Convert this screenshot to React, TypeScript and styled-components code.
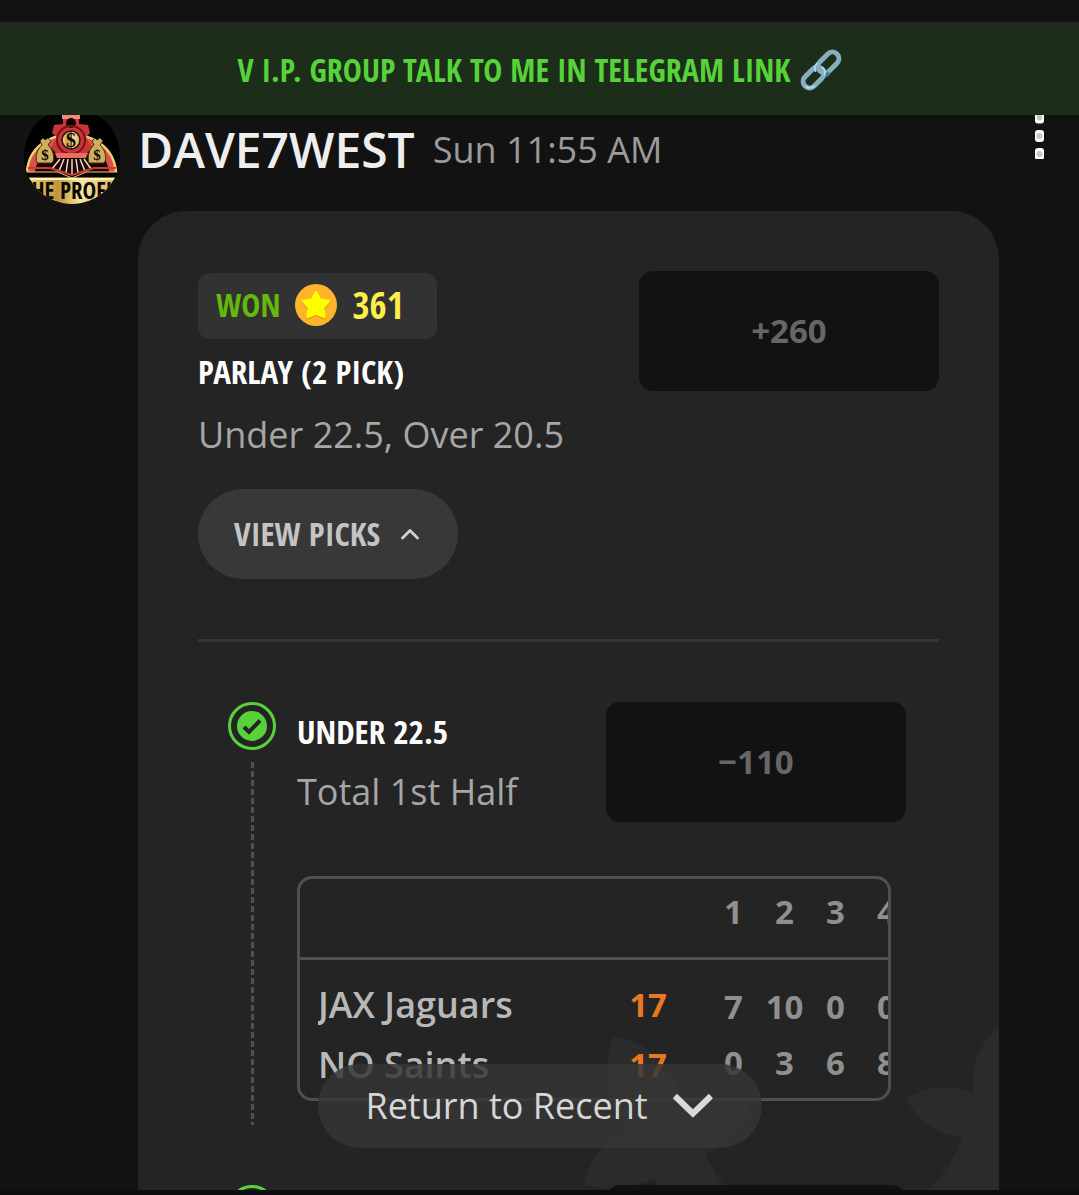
import React from "react";
import styled, { createGlobalStyle } from "styled-components";

const display = `"Saira Semi Condensed", "Noto Sans ExtraCondensed", "Open Sans Condensed", "Noto Sans Condensed", "Roboto Condensed", Roboto, sans-serif`;
const body = `"Open Sans", "Noto Sans", sans-serif`;

const color = {
  page: "#121212",
  card: "#242424",
  raised: "#383838",
  badge: "#323232",
  line: "#505050",
  divider: "#363636",
  green: "#57d23b",
  muted: "#a6a6a6",
};

const GlobalStyle = createGlobalStyle`
  *, *::before, *::after { box-sizing: border-box; }
  body { margin: 0; background: ${color.page}; font-family: ${body}; }
`;

const Screen = styled.div`
  height: 100vh;
  display: flex;
  flex-direction: column;
  overflow: hidden;
  background: ${color.page};
`;

const TopBar = styled.div`
  flex: none;
  height: 25px;
  border-bottom: 3px solid #262626;
`;

const Banner = styled.a`
  flex: none;
  height: 90px;
  display: flex;
  align-items: center;
  justify-content: center;
  gap: 9px;
  background: #1c2e19;
  color: ${color.green};
  font: 600 32px/48px ${display};
  text-decoration: none;
  white-space: nowrap;
`;

const Thread = styled.main`
  flex: 1;
  min-height: 0;
  overflow: hidden;
`;

const Message = styled.article`
  margin-top: -7px;
  padding: 0 24px;
`;

const MessageHead = styled.header`
  display: flex;
  align-items: flex-start;
  height: 103px;
`;

const Author = styled.div`
  flex: 1;
  display: flex;
  align-items: center;
  gap: 18px;
  padding: 9px 0 0 18px;
`;

const Name = styled.h1`
  margin: 0;
  color: #eeeeee;
  font: 600 48px/66px ${body};
`;

const Time = styled.time`
  color: #9b9b9b;
  font-size: 36px;
  line-height: 66px;
`;

const MenuButton = styled.button`
  display: flex;
  margin: 3px 11px 0 0;
  padding: 0;
  border: 0;
  background: none;
`;

const Card = styled.section`
  position: relative;
  margin: 0 56px 0 114px;
  padding: 60px;
  border-radius: 48px;
  background: ${color.card};
`;

const Leaves = styled.svg`
  position: absolute;
  right: 0;
  top: 817px;
`;

const CardTop = styled.div`
  display: flex;
  justify-content: space-between;
  align-items: flex-start;
`;

const Summary = styled.div`
  display: flex;
  flex-direction: column;
  align-items: flex-start;
  padding-top: 2px;
`;

const ResultBadge = styled.div`
  display: flex;
  align-items: center;
  height: 66px;
  padding: 0 33px 3px 18px;
  gap: 15px;
  border-radius: 12px;
  background: ${color.badge};
  font-family: ${display};
  font-weight: 700;
`;

const Outcome = styled.span`
  color: #66b80a;
  font-size: 32px;
`;

const Points = styled.span`
  color: #fdee4a;
  font-size: 37px;
`;

const Title = styled.h2<{ $nested?: boolean }>`
  margin: ${(p) => (p.$nested ? 3 : 6)}px 0 0;
  color: #ffffff;
  font: 700 33px/54px ${display};
`;

const Detail = styled.p<{ $nested?: boolean }>`
  margin: ${(p) => (p.$nested ? 6 : 9)}px 0 0;
  color: ${color.muted};
  font-size: 36px;
  line-height: 54px;
`;

const ViewPicks = styled.button`
  display: flex;
  align-items: center;
  gap: 21px;
  height: 90px;
  margin-top: 27px;
  padding: 0 39px 0 36px;
  border: 0;
  border-radius: 45px;
  background: ${color.raised};
  color: #c4c4c4;
  font: 600 33px/48px ${display};
`;

const Odds = styled.output`
  flex: none;
  display: flex;
  align-items: center;
  justify-content: center;
  width: 300px;
  height: 120px;
  padding-bottom: 2px;
  border-radius: 14px;
  background: ${color.page};
  color: #666666;
  font-size: 33px;
  font-weight: 700;
`;

const Divider = styled.hr`
  height: 3px;
  margin: 60px 0;
  border: 0;
  background: ${color.divider};
`;

const PickList = styled.ol`
  position: relative;
  margin: 0;
  padding: 0 33px 0 30px;
  list-style: none;
`;

const PickItem = styled.li`
  display: flex;
  gap: 21px;
  min-height: 483px;
`;

const Rail = styled.div`
  flex: none;
  width: 48px;
  display: flex;
  flex-direction: column;
  align-items: center;
  gap: 12px;
  padding-bottom: 60px;
`;

const Dashes = styled.div`
  flex: 1;
  width: 3px;
  background: repeating-linear-gradient(${color.line} 0 6px, transparent 6px 9px);
`;

const PickBody = styled.div`
  flex: 1;
  min-width: 0;
`;

const PickTop = styled.div`
  display: flex;
  justify-content: space-between;
  margin-bottom: 54px;
`;

const ScoreBox = styled.div`
  display: flex;
  height: 225px;
  margin-right: 15px;
  border: 3px solid ${color.line};
  border-radius: 15px;
  overflow: hidden;
`;

const Quarters = styled.div`
  flex: none;
  width: 180px;
  overflow: hidden;
`;

const Table = styled.table<{ $row: number; $lead: number; $fixed?: boolean }>`
  flex: 1;
  border-collapse: separate;
  border-spacing: 0;
  table-layout: fixed;
  width: ${(p) => (p.$fixed ? "255px" : "100%")};
  align-self: flex-start;

  th, td { padding: 0; }
  thead th {
    height: 81px;
    padding-bottom: 12px;
    border-bottom: 3px solid ${color.line};
  }
  tbody::before {
    content: "";
    display: block;
    height: ${(p) => p.$lead}px;
  }
  tbody tr { height: ${(p) => p.$row}px; }
`;

const Team = styled.th`
  && { padding-left: 18px; }
  color: #b8b8b8;
  font-size: 36px;
  font-weight: 600;
  line-height: 48px;
  text-align: left;
`;

const TeamName = styled.span`
  display: block;
  overflow: hidden;
  text-overflow: ellipsis;
  white-space: nowrap;
`;

const Total = styled.td`
  width: 120px;
  color: #e87722;
  font-size: 33px;
  font-weight: 700;
  line-height: 48px;
  text-align: center;
`;

const TotalHead = styled.th`
  width: 120px;
`;

const Quarter = styled.td`
  width: 51px;
  color: #8f8f8f;
  font-size: 33px;
  font-weight: 700;
  line-height: 48px;
  text-align: center;
`;

const ReturnButton = styled.button`
  position: absolute;
  left: 50%;
  bottom: 47px;
  transform: translateX(-50%);
  display: flex;
  align-items: center;
  gap: 24px;
  height: 84px;
  padding: 0 48px;
  border: 0;
  border-radius: 42px;
  background: rgba(54, 54, 54, 0.84);
  color: #d6d6d6;
  font: 400 36px/48px ${body};
  white-space: nowrap;
`;

const BottomBar = styled.div`
  flex: none;
  height: 5px;
  background: #0f0d0f;
`;

const LinkIcon = () => (
  <svg width="42" height="42" viewBox="0 0 42 42" fill="none" aria-hidden="true">
    <g stroke="#86aec0" strokeWidth="5">
      <rect x="-12" y="-6.5" width="24" height="13" rx="6.500" transform="translate(13.500 28.500) rotate(-45)" />
      <rect x="-12" y="-6.5" width="24" height="13" rx="6.500" transform="translate(28.500 13.500) rotate(-45)" />
    </g>
    <path d="M29 24 L25.500 27" stroke="#3f7f96" strokeWidth="4" />
    <g stroke="#a9dcea" strokeWidth="2" strokeLinecap="round">
      <path d="M15.500 22 Q13.500 18 17 14.500" />
      <path d="M6 37.500 Q10 40.500 14.500 37" />
      <path d="M22.500 18.500 Q26 21.500 24.500 26" />
    </g>
  </svg>
);

const MoneyBag = ({ x }: { x: number }) => (
  <g transform={`translate(${x} 0)`}>
    <path d="M-5 33 L-2 30 L0 32 L3 30 L6 33 L3 37 C9 42 10 52 7 55 H-8 C-10 49 -8 41 -3 37 Z" fill="#cfae5e" stroke="#41320f" strokeWidth="1" />
    <text x="0" y="52" fill="#0b0703" fontFamily="Liberation Serif, serif" fontSize="15" fontWeight="700" textAnchor="middle">$</text>
  </g>
);

const Avatar = () => (
  <svg width="96" height="96" viewBox="0 0 96 96" role="img" aria-label="The Profit">
    <defs>
      <clipPath id="face"><circle cx="48" cy="48" r="48" /></clipPath>
      <linearGradient id="gold" x1="0" x2="1">
        <stop offset="0" stopColor="#f5dc80" />
        <stop offset="0.35" stopColor="#c1963a" />
        <stop offset="0.6" stopColor="#f7e7a0" />
        <stop offset="1" stopColor="#d9b04c" />
      </linearGradient>
    </defs>
    <g clipPath="url(#face)">
      <rect width="96" height="96" fill="#000000" />
      <path d="M3 64 C6 14 88 14 92 64" fill="#d9534a" stroke="#f1cf6e" strokeWidth="2.500" />
      <path d="M11 64 C16 24 80 24 85 64" fill="#1a0605" />
      <path d="M39 16 V4 H55 V16 L64 17 L66 25 L62 29 L68 40 L62 46 H33 L27 40 L33 29 L28 25 L30 17 Z" fill="#c9353a" />
      <path d="M38 6 H56 V11 H38 Z" fill="#f08c7e" />
      <circle cx="47" cy="15" r="5" fill="#120303" />
      <circle cx="47" cy="32" r="14" fill="none" stroke="#6d1518" strokeWidth="2" />
      <circle cx="47" cy="32" r="9" fill="url(#gold)" stroke="#3a0c0c" strokeWidth="1.500" />
      <text x="47" y="39" fill="#0b0703" fontFamily="Liberation Serif, serif" fontSize="20" fontWeight="700" textAnchor="middle">$</text>
      <path d="M31 45 H64 L62 50 H33 Z" fill="#ea6d60" />
      <path d="M36 51 L28 61 M40 51 L35 63 M44 51 L42 65 M48 51 V66 M52 51 L54 65 M56 51 L61 63 M60 51 L67 61" stroke="#e8dcc0" strokeWidth="1.500" />
      <MoneyBag x={21} />
      <MoneyBag x={73} />
      <path d="M4 60 H26 L48 67 L70 60 H92" fill="none" stroke="#d2383a" strokeWidth="2" />
      <path d="M2 64 H34 L48 70 L62 64 H94 V70 H2 Z" fill="#080404" stroke="#f1cf6e" strokeWidth="1" />
      <rect y="70" width="96" height="26" fill="url(#gold)" />
      <rect y="70" width="96" height="2" fill="#fff2b8" />
      <text x="48" y="91" fill="#0b0703" fontFamily="Open Sans Condensed, Roboto Condensed, sans-serif" fontSize="23" fontWeight="700" textAnchor="middle">THE PROFIT</text>
    </g>
  </svg>
);

const MenuDots = () => (
  <svg width="9" height="48" viewBox="0 0 9 48" aria-hidden="true">
    {[6.5, 25, 43].map((y) => (
      <g key={y}>
        <rect x="0" y={y - 6} width="9" height="12" rx="3" fill="#ffffff" />
        <circle cx="4.5" cy={y} r="3" fill="#c6c6c6" />
      </g>
    ))}
  </svg>
);

const StarCoin = () => (
  <svg width="42" height="42" viewBox="0 0 42 42" aria-hidden="true">
    <circle cx="21" cy="21" r="21" fill="#ffb42c" />
    <path d="M21 9 L25 16.500 L34 18 L28 25 L29.500 34 L21 30.500 L12.500 34 L14 25 L8 18 L17 16.500 Z" fill="#e58a16" stroke="#e58a16" strokeWidth="2.500" strokeLinejoin="round" />
    <path d="M21 8 L25 15.500 L34 17 L28 24 L29.500 33 L21 29.500 L12.500 33 L14 24 L8 17 L17 15.500 Z" fill="#ffff00" stroke="#ffff00" strokeWidth="2.500" strokeLinejoin="round" />
  </svg>
);

const ChevronUp = () => (
  <svg width="18" height="12" viewBox="0 0 18 12" fill="none" aria-hidden="true">
    <path d="M1.500 10 L9 2.500 L16.500 10" stroke="#d0d0d0" strokeWidth="2.800" strokeLinecap="round" strokeLinejoin="round" />
  </svg>
);

const ChevronDown = () => (
  <svg width="42" height="26" viewBox="0 0 42 26" fill="none" aria-hidden="true">
    <path d="M3 3 L21 20.500 L39 3" stroke="#dadada" strokeWidth="6" />
  </svg>
);

const CheckRing = () => (
  <svg width="48" height="48" viewBox="0 0 48 48" fill="none" aria-hidden="true">
    <circle cx="24" cy="24" r="22.500" stroke={color.green} strokeWidth="3" />
    <circle cx="24" cy="24" r="15" fill={color.green} />
    <path d="M16 25 L21 30 L32 18.500" stroke={color.card} strokeWidth="4" />
  </svg>
);

const LeafShapes = () => (
  <Leaves width="420" height="162" viewBox="0 0 420 162" fill="#2b2b2b" aria-hidden="true">
    <path d="M35 8 C24 30 24 76 51 102 C30 108 10 130 5 156 C20 162 50 164 76 150 L79 162 H149 Q136 148 126 125 C150 116 168 98 173 72 C145 66 118 72 106 84 C98 42 68 12 35 8 Z" />
    <path d="M420 0 C398 16 391 42 395 65 C372 56 345 58 327 71 C342 96 360 107 383 109 Q374 138 349 162 H420 Z" />
  </Leaves>
);

type Line = { team: string; total: number; quarters: number[] };
type Pick = { name: string; market: string; odds: string; lines: Line[] };

const picks: Pick[] = [
  {
    name: "UNDER 22.5",
    market: "Total 1st Half",
    odds: "−110",
    lines: [
      { team: "JAX Jaguars", total: 17, quarters: [7, 10, 0, 0] },
      { team: "NO Saints", total: 17, quarters: [0, 3, 6, 8] },
    ],
  },
];

const Scoreboard = ({ lines }: { lines: Line[] }) => (
  <ScoreBox>
    <Table $row={60} $lead={15}>
      <thead>
        <tr>
          <th />
          <TotalHead />
        </tr>
      </thead>
      <tbody>
        {lines.map((l) => (
          <tr key={l.team}>
            <Team scope="row"><TeamName>{l.team}</TeamName></Team>
            <Total>{l.total}</Total>
          </tr>
        ))}
      </tbody>
    </Table>
    <Quarters>
      <Table $row={56} $lead={19} $fixed>
        <thead>
          <tr>
            {[1, 2, 3, 4].map((q) => (
              <Quarter as="th" scope="col" key={q}>{q}</Quarter>
            ))}
            <th />
          </tr>
        </thead>
        <tbody>
          {lines.map((l) => (
            <tr key={l.team}>
              {l.quarters.map((q, i) => (
                <Quarter key={i}>{q}</Quarter>
              ))}
            </tr>
          ))}
        </tbody>
      </Table>
    </Quarters>
  </ScoreBox>
);

export default function App() {
  return (
    <Screen>
      <GlobalStyle />
      <TopBar />
      <Banner href="#telegram">
        V I.P. GROUP TALK TO ME IN TELEGRAM LINK
        <LinkIcon />
      </Banner>
      <Thread>
        <Message>
          <MessageHead>
            <Avatar />
            <Author>
              <Name>DAVE7WEST</Name>
              <Time>Sun 11:55 AM</Time>
            </Author>
            <MenuButton type="button" aria-label="Message options">
              <MenuDots />
            </MenuButton>
          </MessageHead>
          <Card>
            <LeafShapes />
            <CardTop>
              <Summary>
                <ResultBadge>
                  <Outcome>WON</Outcome>
                  <StarCoin />
                  <Points>361</Points>
                </ResultBadge>
                <Title>PARLAY (2 PICK)</Title>
                <Detail>Under 22.5, Over 20.5</Detail>
                <ViewPicks type="button" aria-expanded="true">
                  VIEW PICKS
                  <ChevronUp />
                </ViewPicks>
              </Summary>
              <Odds>+260</Odds>
            </CardTop>
            <Divider />
            <PickList>
              {picks.map((p) => (
                <PickItem key={p.name}>
                  <Rail>
                    <CheckRing />
                    <Dashes />
                  </Rail>
                  <PickBody>
                    <PickTop>
                      <div>
                        <Title as="h3" $nested>{p.name}</Title>
                        <Detail $nested>{p.market}</Detail>
                      </div>
                      <Odds>{p.odds}</Odds>
                    </PickTop>
                    <Scoreboard lines={p.lines} />
                  </PickBody>
                </PickItem>
              ))}
              <PickItem>
                <Rail>
                  <CheckRing />
                </Rail>
                <PickBody>
                  <PickTop>
                    <span />
                    <Odds />
                  </PickTop>
                </PickBody>
              </PickItem>
            </PickList>
          </Card>
        </Message>
      </Thread>
      <BottomBar />
      <ReturnButton type="button">
        Return to Recent
        <ChevronDown />
      </ReturnButton>
    </Screen>
  );
}
